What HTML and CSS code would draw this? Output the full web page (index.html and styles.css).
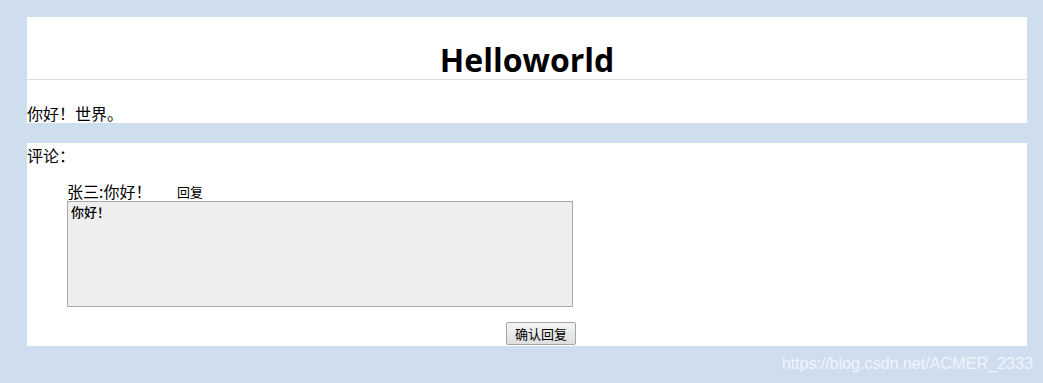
FILE: index.html
```html
<!DOCTYPE html>
<html lang="zh">
<head>
<meta charset="utf-8">
<title>Helloworld</title>
<link rel="stylesheet" href="styles.css">
</head>
<body>
<div class="page">
  <section class="article">
    <header class="article-head"><h1 class="title">Helloworld</h1></header>
    <p class="content">你好！世界。</p>
  </section>
  <section class="comments">
    <div class="comments-label">评论：</div>
    <div class="comment">
      <div class="comment-line"><span class="comment-text">张三:你好！</span><a class="reply-link">回复</a></div>
      <textarea class="reply-box">你好！</textarea>
      <div class="actions"><button class="confirm">确认回复</button></div>
    </div>
  </section>
</div>
<div class="watermark">https://blog.csdn.net/ACMER_2333</div>
</body>
</html>
```
FILE: styles.css
```css
html, body { margin: 0; padding: 0; }
body {
  background: #cfdeef;
  font-family: "Noto Sans CJK SC", "Open Sans", sans-serif;
  color: #000;
  height: 383px;
  overflow: hidden;
  position: relative;
}
.page {
  width: 1000px;
  margin: 17px 0 0 27px;
  display: flex;
  flex-direction: column;
  gap: 20px;
}
.article { background: #fff; height: 106px; display: flex; flex-direction: column; }
.article-head {
  height: 62px;
  border-bottom: 1px solid #e0e0e0;
  display: flex;
  justify-content: center;
  align-items: flex-end;
}
.title {
  margin: 0;
  font-family: "Open Sans", "Noto Sans CJK SC", sans-serif;
  font-weight: 700;
  font-size: 32px;
  line-height: 38px;
}
.content {
  margin: 0;
  flex: 1;
  display: flex;
  align-items: flex-end;
  font-size: 16px;
  line-height: 20px;
}
.comments { background: #fff; height: 203px; display: flex; flex-direction: column; }
.comments-label { font-size: 16px; line-height: 24px; }
.comment { padding: 14px 0 0 40px; display: flex; flex-direction: column; width: 509px; }
.comment-line { display: flex; align-items: flex-end; font-size: 16px; line-height: 20px; }
.comment-text { width: 110px; }
.reply-link { font-size: 13px; line-height: 18px; }
.reply-box {
  box-sizing: border-box;
  width: 506px;
  height: 106px;
  margin: 0;
  padding: 2px 3px;
  border: 1px solid #a9a9a9;
  background: #eeeeee;
  font-family: "Noto Sans CJK SC", sans-serif;
  font-size: 13px;
  line-height: 16px;
  resize: none;
  font-weight: 500;
}
.actions { display: flex; justify-content: flex-end; padding-top: 15px; }
.confirm {
  box-sizing: border-box;
  width: 70px;
  height: 23px;
  padding: 0;
  font-family: "Noto Sans CJK SC", sans-serif;
  font-size: 13px;
  border: 1px solid #a5a5a5;
  border-radius: 2px;
  background: linear-gradient(#f5f5f5, #dedede);
  color: #000;
}
.watermark {
  position: absolute;
  right: 10px;
  top: 354px;
  font-family: "Liberation Sans", Arial, sans-serif;
  font-size: 16.5px;
  color: rgba(255, 255, 255, 0.7);
  letter-spacing: -0.2px;
}
```
